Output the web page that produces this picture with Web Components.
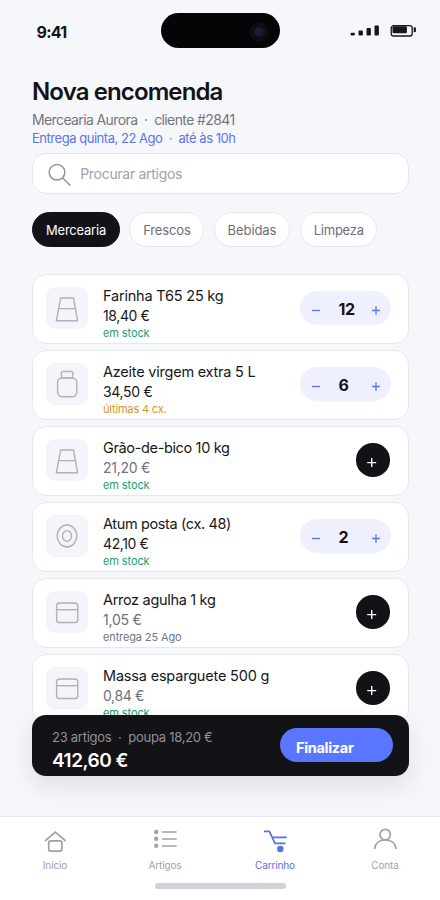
<!DOCTYPE html>
<html lang="pt">
<head>
<meta charset="utf-8">
<title>Nova encomenda</title>
<style>
html,body{margin:0;padding:0}
body{width:440px;height:900px;overflow:hidden;background:#f6f7fb;font-family:Inter,"Liberation Sans",sans-serif;color:#131317}
</style>
</head>
<body>
<order-screen></order-screen>
<script>
const define = (name, html, setup) => customElements.define(name, class extends HTMLElement {
  connectedCallback() {
    if (this.shadowRoot) return;
    const t = document.createElement('template');
    t.innerHTML = typeof html === 'function' ? html(this) : html;
    this.attachShadow({mode: 'open'}).append(t.content.cloneNode(true));
    if (setup) setup(this);
  }
});

// A single line of text whose tracking is set so that it fills the given width.
define('fit-text', `<style>:host{display:block;white-space:pre}span{display:inline-block}</style><span><slot></slot></span>`, el => {
  const s = el.shadowRoot.querySelector('span');
  const w = +el.getAttribute('w');
  const n = el.textContent.length;
  s.style.letterSpacing = ((w - s.getBoundingClientRect().width) / n).toFixed(3) + 'px';
});

define('status-bar', `<style>
:host{display:flex;height:76px;box-sizing:border-box;padding:13px 0 0 36.5px;align-items:flex-start}
:host>*{flex:none}
.time{box-sizing:border-box;font-size:16px;font-weight:700;line-height:20px;padding-top:9px;width:124.5px}
.island{width:118.5px;height:35px;border-radius:18px;background:#050507;display:flex;justify-content:flex-end;align-items:center;box-sizing:border-box;padding:2px 10.5px 0 0}
svg{display:block}.sys{margin-left:70px;margin-top:10px}
.time,.island,.sys{flex:none}
</style>
<fit-text class="time" w="30">9:41</fit-text>
<div class="island"><svg width="20" height="20"><circle cx="10" cy="10" r="9.5" fill="#0d0d14"/><circle cx="10" cy="10" r="4.7" fill="#1b1b31"/></svg></div>
<svg class="sys" width="68" height="16" fill="#17171b"><rect x=".5" y="9.8" width="4.4" height="2.6" rx="1"/><rect x="8.5" y="7.5" width="4.4" height="5" rx="1"/><rect x="16.5" y="5" width="4.4" height="7.5" rx="1"/><rect x="24.5" y="2.5" width="4.4" height="10" rx="1"/><rect x="41.2" y="2.6" width="21" height="10.4" rx="2.6" fill="none" stroke="#17171b" stroke-width="1.3"/><rect x="42.5" y="3.2" width="14.4" height="7" rx="1"/><rect x="63.7" y="4.2" width="2.2" height="5" rx=".8"/></svg>`);

define('page-title', `<style>
:host{display:block;padding:1px 32px 0;height:77px;box-sizing:border-box}
.t{font-size:24px;font-weight:600;line-height:30px}
.s{font-size:14px;line-height:18px;margin-top:3.5px;color:#74757f}
.d{font-size:13px;line-height:18px;color:#5b74e8}
</style>
<fit-text class="t" w="190.5">Nova encomenda</fit-text>
<fit-text class="s" w="202.5">Mercearia Aurora  ·  cliente #2841</fit-text>
<fit-text class="d" w="203.5">Entrega quinta, 22 Ago  ·  até às 10h</fit-text>`);

define('search-field', `<style>
:host{display:flex;align-items:center;margin:0 32px;width:376.5px;height:40.5px;box-sizing:border-box;background:#fff;border:1px solid #e6e7ee;border-radius:14px;padding-left:14.7px;color:#a0a1ab;font-size:14px;line-height:20px}
svg{display:block;margin:4px 8px 0 0}
fit-text{margin-top:1px;margin-left:.5px}
</style><svg width="24" height="24" fill="none" stroke="#92939d" stroke-width="1.5"><circle cx="9" cy="9.3" r="7.8"/><path d="M14.8 15L22.3 22.5"/></svg><fit-text w="102">Procurar artigos</fit-text>`);

define('filter-chip', el => `<style>
:host{display:flex;align-items:center;height:34.5px;width:${el.getAttribute('box')}px;box-sizing:border-box;padding-left:13px;border:1px solid #e6e7ee;border-radius:18px;background:#fff;color:#6d6e79;font-size:13px;line-height:18px}
:host([active]){background:#131317;border-color:#131317;color:#fff}
fit-text{margin-top:2px}
</style><fit-text w="${el.getAttribute('w')}">${el.getAttribute('label')}</fit-text>`);

define('filter-row', `<style>:host{display:flex;gap:9.7px;padding:18.5px 32px 27.5px}</style>
<filter-chip active box="87.5" w="60" label="Mercearia"></filter-chip>
<filter-chip box="74.7" w="47.5" label="Frescos"></filter-chip>
<filter-chip box="76.5" w="48.8" label="Bebidas"></filter-chip>
<filter-chip box="77" w="50" label="Limpeza"></filter-chip>`);

const thumbs = {
  sack: '<path d="M14.7 11H27.6L31.5 33.7H10.4ZM12.7 21.6H29.3"/>',
  jar: '<rect x="15.4" y="8.5" width="11.4" height="6.4" rx="1.6"/><rect x="11.6" y="15" width="19.2" height="18.8" rx="4.5"/>',
  can: '<ellipse cx="21" cy="21" rx="9.8" ry="11"/><ellipse cx="21" cy="21" rx="4.5" ry="5.4"/>',
  box: '<rect x="10.6" y="12" width="21.2" height="19.5" rx="2.8"/><path d="M10.6 18.7H31.8"/>'
};
define('product-thumb', el => `<style>:host{display:block;width:42px;height:41.5px;border-radius:9px;background:#f4f5fa}svg{display:block}</style>
<svg width="42" height="42" fill="none" stroke="#b0b1b9" stroke-width="1.4" stroke-linejoin="round">${thumbs[el.getAttribute('kind')]}</svg>`);

define('qty-stepper', el => `<style>
:host{display:flex;align-items:center;width:90.5px;height:33.5px;border-radius:17px;background:#eef0ff;box-sizing:border-box;padding:3px 11px 0 12px}
svg{display:block;flex:none;margin-top:1px}
.n{flex:1;font-size:16px;font-weight:700;line-height:20px;padding-left:18.5px}
</style><svg width="8" height="10" stroke="#5b74e8" stroke-width="1.3"><path d="M0 5.5H8"/></svg>
<fit-text class="n" w="${el.getAttribute('w')}">${el.getAttribute('value')}</fit-text>
<svg width="8" height="10" stroke="#5b74e8" stroke-width="1.3"><path d="M0 5.5H8M4 1.2V9.8"/></svg>`);

define('add-button', `<style>:host{display:block;width:33.5px;height:33.5px;border-radius:50%;background:#131317;margin-right:1px}svg{display:block}</style>
<svg width="33" height="33" stroke="#fff" stroke-width="1.4"><path d="M11.2 19.6H20.2M15.7 15.1V24.1"/></svg>`);

define('product-card', `<style>
:host{display:flex;width:376.5px;height:70px;box-sizing:border-box;background:#fff;border:1px solid #e7e8ee;border-radius:14px;padding:0 17px 0 13px}
.info{flex:1;padding:11px 0 0 15px}
.action{padding-top:16px}
</style><slot name="thumb"></slot><div class="info"><slot></slot></div><div class="action"><slot name="action"></slot></div>`);

const items = [
  ['sack','Farinha T65 25 kg',120.5,'18,40 €',46.5,'em stock',46.5,'g','12',16],
  ['jar','Azeite virgem extra 5 L',152.5,'34,50 €',49.5,'últimas 4 cx.',63.5,'o','6',10],
  ['sack','Grão-de-bico 10 kg',126.5,'21,20 €',47,'em stock',46.5,'g'],
  ['can','Atum posta (cx. 48)',128,'42,10 €',45.5,'em stock',46.5,'g','2',10],
  ['box','Arroz agulha 1 kg',112.5,'1,05 €',38.5,'entrega 25 Ago',78.5,'n'],
  ['box','Massa esparguete 500 g',166.2,'0,84 €',41,'em stock',46.5,'g']
];
define('product-list', `<style>
:host{display:flex;flex-direction:column;gap:6px;padding:0 31.5px 0 32px}
product-thumb{margin-top:12px}
.name{font-size:14.5px;line-height:20px;color:#18181c}
.price{font-size:14px;line-height:20px;color:#70717c}
.price.in{color:#18181c}
.st{font-size:11px;line-height:14px;margin-top:-.5px}
.g{color:#20a071}.o{color:#d4951f}.n{color:#74757f}
</style>` + items.map(([k,n,nw,p,pw,s,sw,c,q,qw]) => `<product-card>
<product-thumb slot="thumb" kind="${k}"></product-thumb>
<fit-text class="name" w="${nw}">${n}</fit-text>
<fit-text class="price${q ? ' in' : ''}" w="${pw}">${p}</fit-text>
<fit-text class="st ${c}" w="${sw}">${s}</fit-text>
${q ? `<qty-stepper slot="action" value="${q}" w="${qw}"></qty-stepper>` : '<add-button slot="action"></add-button>'}
</product-card>`).join(''));

define('cart-bar', `<style>
:host{display:flex;box-sizing:border-box;width:376.5px;height:60.5px;border-radius:14px;background:#131317;padding:13px 16px 0 20px;box-shadow:0 9px 24px rgba(20,25,30,.11);justify-content:space-between}
.s{font-size:13px;line-height:18px;color:#8f9098}
.t{font-size:19px;font-weight:600;line-height:24px;color:#fff;margin-top:2.5px}
.btn{width:112.5px;height:33.5px;border-radius:17px;background:#5b76fe;color:#fff;font-size:14.5px;font-weight:700;line-height:20px;box-sizing:border-box;padding:9.5px 0 0 16px}
</style><div><fit-text class="s" w="160.5">23 artigos  ·  poupa 18,20 €</fit-text><fit-text class="t" w="76">412,60 €</fit-text></div>
<div class="btn"><fit-text w="57.5">Finalizar</fit-text></div>`);

const icons = {
  home: '<path d="M4 14L14.3 5.2L24.7 14"/><rect x="7.7" y="13.8" width="13.2" height="10.3" rx="2"/>',
  list: '<g fill="currentColor" stroke="none"><circle cx="5.2" cy="5" r="2.2"/><circle cx="5.2" cy="11.8" r="2.2"/><circle cx="5.2" cy="18.7" r="2.2"/></g><path d="M11 5H25.6M11 12H25.6M11 19H25.6"/>',
  cart: '<path d="M3 4.3H8.4L14 16.3H24.6M11 10.4H25.8"/><circle cx="19.3" cy="22" r="3.2" fill="currentColor" stroke="none"/>',
  user: '<circle cx="14.2" cy="7.6" r="5.2"/><path d="M3.5 22C4.2 16.4 8.3 13 14.3 13S24.4 16.4 25.2 22"/>'
};
define('tab-item', el => `<style>
:host{display:flex;flex-direction:column;align-items:center;width:110px;color:#a0a1a9;font-size:10px;line-height:12px}
:host([active]){color:#5671e6}
svg{display:block}fit-text{margin-top:4px}
</style><svg width="28" height="28" fill="none" stroke="currentColor" stroke-width="1.7">${icons[el.getAttribute('icon')]}</svg>
<fit-text w="${el.getAttribute('w')}">${el.getAttribute('label')}</fit-text>`);

define('tab-bar', `<style>
:host{display:flex;flex-direction:column;align-items:center;height:84px;box-sizing:border-box;background:#fff;border-top:1px solid #e6e7ee;padding-top:10px}
nav{display:flex}
.home{width:131px;height:5.5px;border-radius:3px;background:#d0d1d9;margin-top:12px}
</style><nav>
<tab-item icon="home" label="Início" w="24.5"></tab-item>
<tab-item icon="list" label="Artigos" w="33"></tab-item>
<tab-item icon="cart" label="Carrinho" w="40" active></tab-item>
<tab-item icon="user" label="Conta" w="27.5"></tab-item>
</nav><div class="home"></div>`);

define('order-screen', `<style>
:host{display:flex;flex-direction:column;width:440px;height:900px;position:relative;background:#f6f7fb;overflow:hidden}
product-list{flex:1}
cart-bar{position:absolute;left:32px;top:715px}
</style>
<status-bar></status-bar><page-title></page-title><search-field></search-field><filter-row></filter-row><product-list></product-list><cart-bar></cart-bar><tab-bar></tab-bar>`);
</script>
</body>
</html>
